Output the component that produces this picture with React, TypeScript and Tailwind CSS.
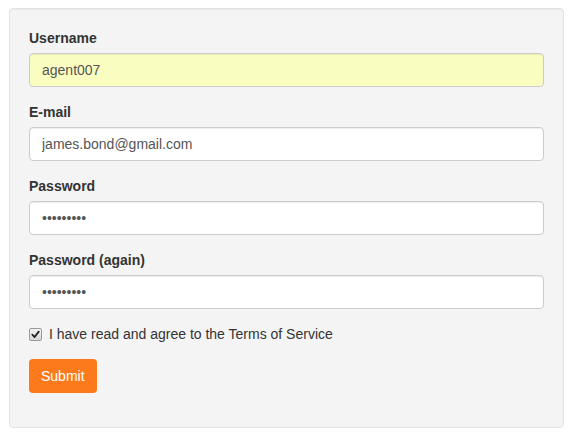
import React from "react";

const inputCls =
  "block w-full h-[34px] px-3 py-[6px] text-[14px] leading-[20px] text-[#555] border border-[#ccc] rounded-[4px] shadow-[inset_0_1px_1px_rgba(0,0,0,0.075)] outline-none";

function Field({ label, value, type = "text", bg = "bg-white" }: { label: string; value: string; type?: string; bg?: string }) {
  return (
    <div className="mb-[15px]">
      <label className="block mb-[5px] text-[14px] leading-[20px] font-bold text-[#333]">{label}</label>
      <input className={`${inputCls} ${bg}`} type={type} defaultValue={value} readOnly />
    </div>
  );
}

export default function App() {
  return (
    <div className="w-[571px] h-[437px] bg-white pt-[8px] pl-[9px]" style={{ fontFamily: '"Liberation Sans", Arial, sans-serif' }}>
      <div className="w-[555px] bg-[#f4f4f4] border border-[#e3e3e3] rounded-[4px] p-[19px] shadow-[inset_0_1px_1px_rgba(0,0,0,0.05)]">
        <Field label="Username" value="agent007" bg="bg-[#fafdc0]" />
        <Field label="E-mail" value="james.bond@gmail.com" />
        <Field label="Password" value="secret007" type="password" />
        <Field label="Password (again)" value="secret007" type="password" />
        <div className="mb-[15px] flex items-center h-[20px] text-[14px] leading-[20px] text-[#333]">
          <span className="w-[13px] h-[13px] mr-[7px] rounded-[2px] border border-[#9a9a9a] bg-gradient-to-b from-[#f4f4f4] to-[#d8d8d8] flex items-center justify-center">
            <svg width="9" height="9" viewBox="0 0 10 10">
              <path d="M1.5 5.2 L4 7.8 L8.6 1.8" stroke="#222" strokeWidth="2" fill="none" strokeLinecap="round" strokeLinejoin="round" />
            </svg>
          </span>
          <span>I have read and agree to the Terms of Service</span>
        </div>
        <div className="mb-[15px]">
          <button className="h-[34px] px-3 text-[14px] leading-[20px] text-white bg-[#fd7a1c] rounded-[4px]">Submit</button>
        </div>
      </div>
    </div>
  );
}
